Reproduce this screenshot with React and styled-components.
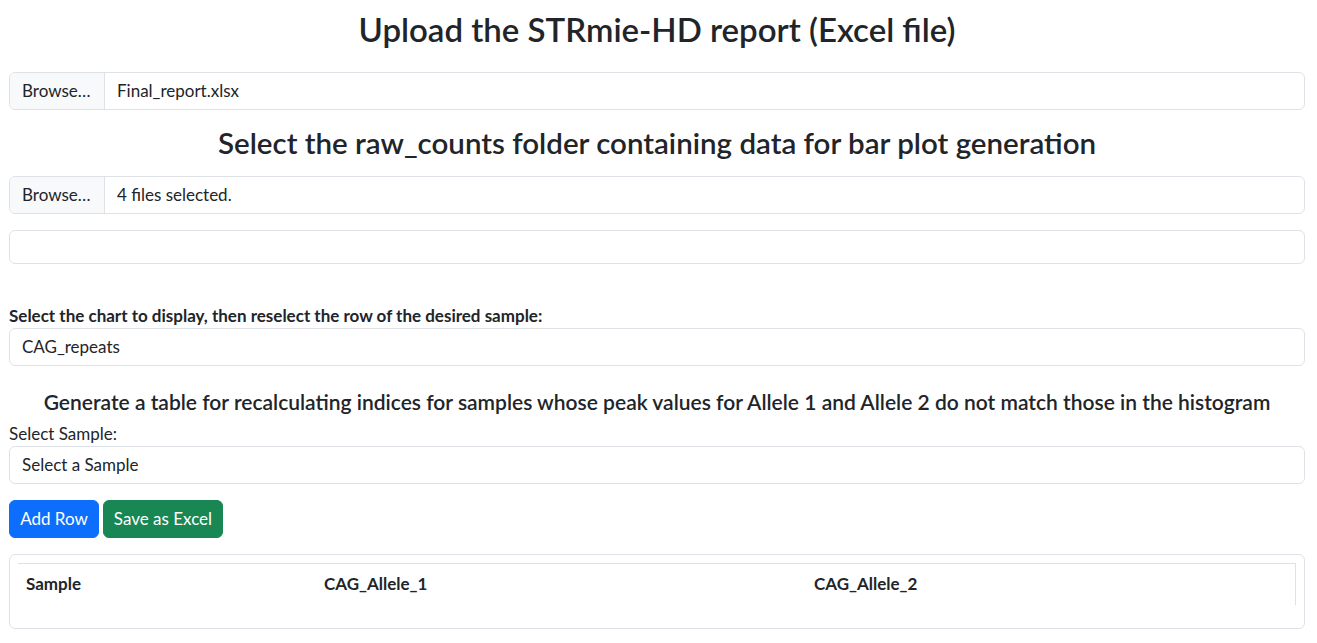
import React, { useState } from "react";
import styled, { createGlobalStyle } from "styled-components";

const GlobalStyle = createGlobalStyle`
  *, *::before, *::after { box-sizing: border-box; }
  body {
    margin: 0;
    background: #fff;
    color: #212529;
    font-family: Lato, "Noto Sans", sans-serif;
    font-size: 17px;
    line-height: 24px;
  }
`;

const Page = styled.div`
  padding: 0 12px 0 9px;
`;

const Title = styled.h2`
  margin: ${(p) => p.$top}px 0 0;
  text-align: center;
  font-size: ${(p) => p.$size}px;
  line-height: ${(p) => p.$lh}px;
  font-weight: 600;
`;

const FileBox = styled.div`
  display: flex;
  height: 38px;
  margin-top: ${(p) => p.$top}px;
  border: 1px solid #dee2e6;
  border-radius: 6px;
  overflow: hidden;
`;

const BrowseBtn = styled.div`
  width: 95px;
  flex: none;
  padding: 6px 12px;
  background: #f8f9fa;
  border-right: 1px solid #dee2e6;
`;

const FileName = styled.div`
  padding: 6px 12px;
`;

const Field = styled.div`
  height: ${(p) => p.$h || 38}px;
  margin-top: ${(p) => p.$top || 0}px;
  padding: 6px 12px;
  border: 1px solid #dee2e6;
  border-radius: 6px;
`;

const Label = styled.div`
  margin-top: ${(p) => p.$top}px;
  font-weight: ${(p) => (p.$bold ? 700 : 400)};
`;

const Actions = styled.div`
  display: flex;
  gap: 4px;
  margin-top: 16px;
`;

const Button = styled.button`
  width: ${(p) => p.$w}px;
  height: 38px;
  padding: 0;
  border: 1px solid ${(p) => p.$bg};
  border-radius: 6px;
  background: ${(p) => p.$bg};
  color: #fff;
  font: inherit;
  line-height: 24px;
  white-space: nowrap;
  text-align: center;
  cursor: pointer;
`;

const Card = styled.div`
  margin-top: 16px;
  padding: 8px 8px 23px;
  border: 1px solid #dee2e6;
  border-radius: 6px;
`;

const TableWrap = styled.div`
  height: 42px;
  overflow: hidden;
  border-top: 1px solid #dee2e6;
  border-right: 1px solid #dee2e6;
`;

const Table = styled.table`
  width: 100%;
  border-collapse: collapse;
  table-layout: fixed;
`;

const Th = styled.th`
  width: ${(p) => p.$w}px;
  padding: 8px;
  text-align: left;
  font-weight: 700;
`;

export default function App() {
  const [rows] = useState([]);
  return (
    <>
      <GlobalStyle />
      <Page>
        <Title $top={10} $size={33} $lh={38}>
          Upload the STRmie-HD report (Excel file)
        </Title>
        <FileBox $top={24}>
          <BrowseBtn>Browse…</BrowseBtn>
          <FileName>Final_report.xlsx</FileName>
        </FileBox>

        <Title $top={16} $size={29.5} $lh={34}>
          Select the raw_counts folder containing data for bar plot generation
        </Title>
        <FileBox $top={16}>
          <BrowseBtn>Browse…</BrowseBtn>
          <FileName>4 files selected.</FileName>
        </FileBox>
        <Field $h={34} $top={16} />

        <Label $top={40} $bold>
          Select the chart to display, then reselect the row of the desired sample:
        </Label>
        <Field>CAG_repeats</Field>

        <Title $top={24} $size={21} $lh={24}>
          Generate a table for recalculating indices for samples whose peak values for Allele 1 and Allele 2 do not match those in the histogram
        </Title>
        <Label $top={8}>Select Sample:</Label>
        <Field>Select a Sample</Field>

        <Actions>
          <Button $w={90} $bg="#0d6efd">Add Row</Button>
          <Button $w={120} $bg="#198754">Save as Excel</Button>
        </Actions>

        <Card>
          <TableWrap>
            <Table>
              <thead>
                <tr>
                  <Th $w={298}>Sample</Th>
                  <Th $w={490}>CAG_Allele_1</Th>
                  <Th $w={490}>CAG_Allele_2</Th>
                </tr>
              </thead>
              <tbody>
                {rows.map((r) => (
                  <tr key={r.sample}>
                    <td>{r.sample}</td>
                    <td>{r.a1}</td>
                    <td>{r.a2}</td>
                  </tr>
                ))}
              </tbody>
            </Table>
          </TableWrap>
        </Card>
      </Page>
    </>
  );
}
